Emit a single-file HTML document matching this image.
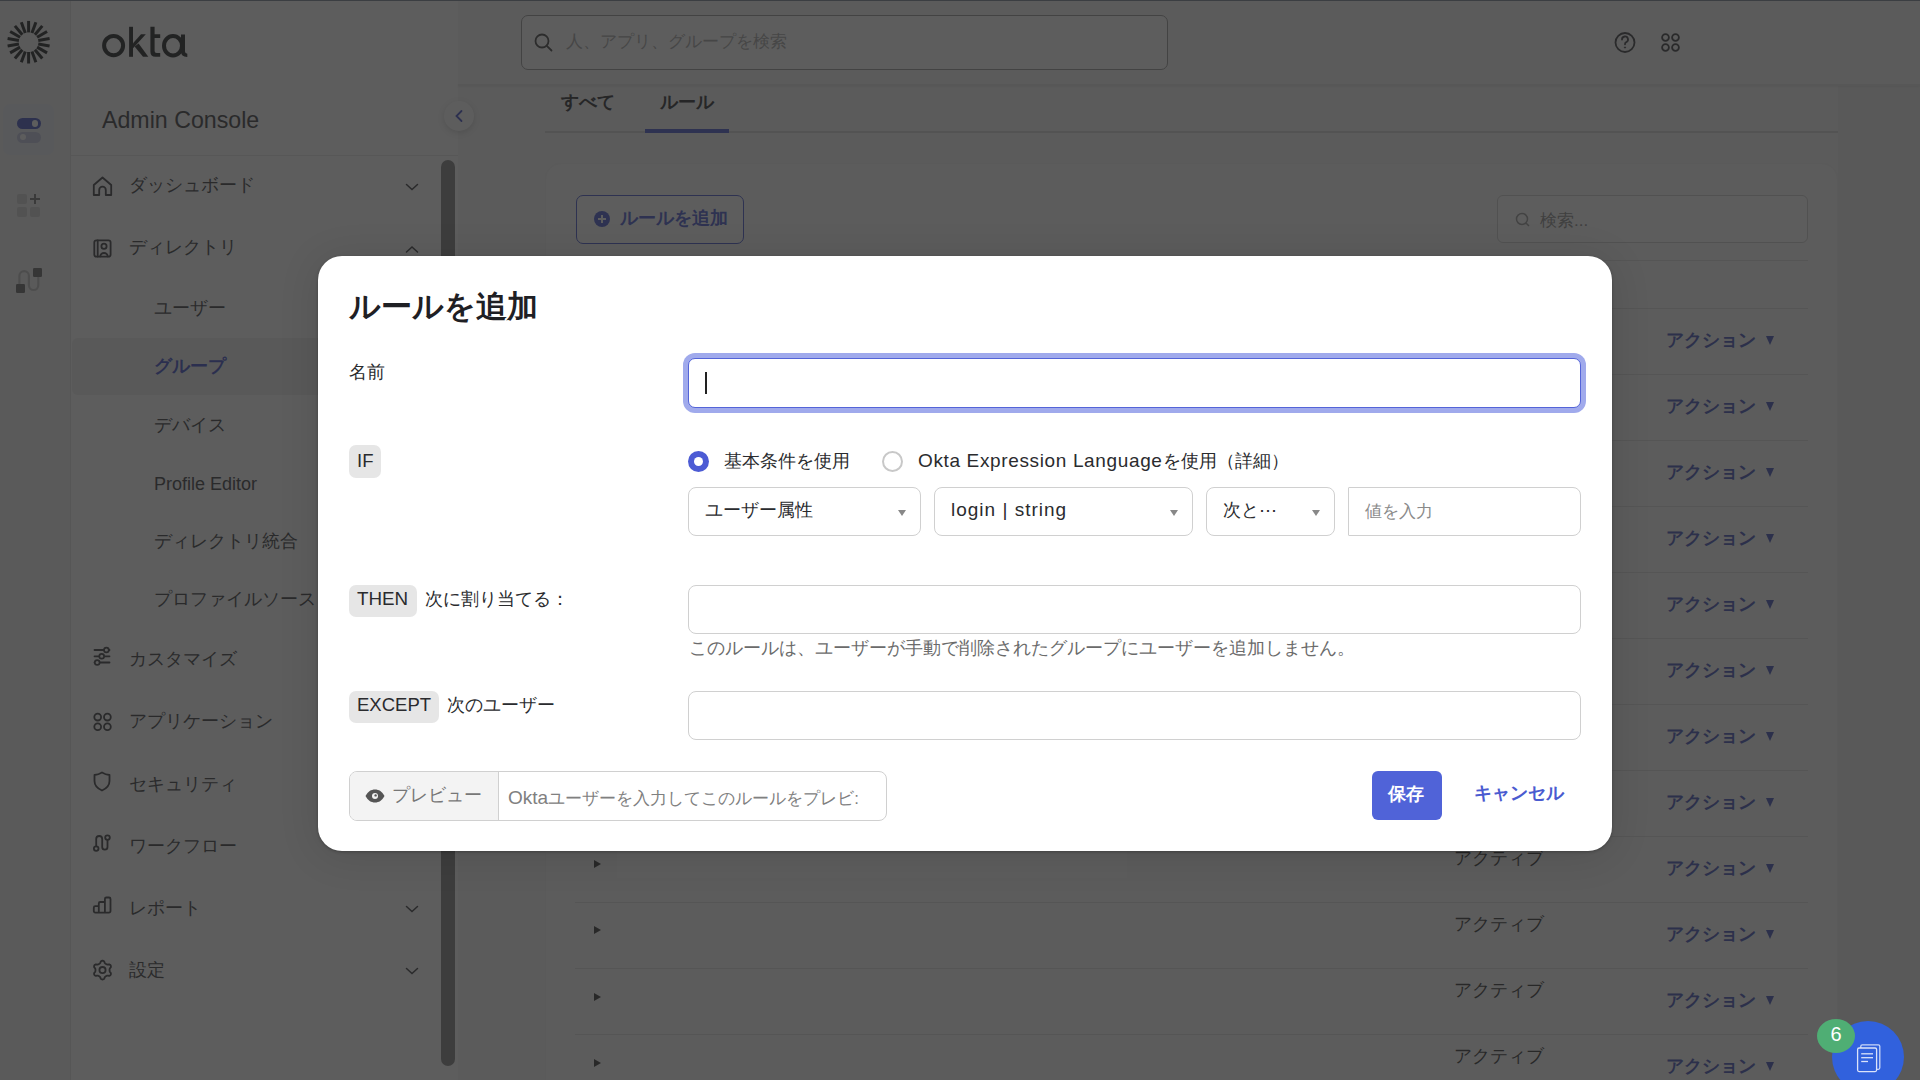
<!DOCTYPE html><html lang="ja"><head><meta charset="utf-8"><style>
*{box-sizing:border-box;margin:0;padding:0}
html,body{width:1920px;height:1080px;overflow:hidden}
body{font-family:"Liberation Sans",sans-serif;background:#fff;color:#1d1d21;position:relative}
.a{position:absolute}
.t{position:absolute;white-space:nowrap;line-height:1}
.nav{font-size:18px;color:#393a3d}
.lbl{font-size:18px;color:#2a2b2e}
.badge{position:absolute;background:#e6e6e6;border-radius:7px}
.inp{position:absolute;border:1.5px solid #d0d0d0;border-radius:8px;background:#fff}
.caret{position:absolute;width:0;height:0;border-left:4.5px solid transparent;border-right:4.5px solid transparent;border-top:6px solid #555}
</style></head><body>
<div class="a" style="left:0;top:0;width:70px;height:1080px;background:#f3f3f3"></div>
<div class="a" style="left:70px;top:0;width:1px;height:1080px;background:#e3e3e3"></div>
<div class="a" style="left:71px;top:0;width:387px;height:1080px;background:#fdfdfd"></div>
<div class="a" style="left:458px;top:0;width:1462px;height:1080px;background:#efefef"></div>
<div class="a" style="left:458px;top:0;width:1462px;height:84px;background:#f6f6f6"></div>
<div class="a" style="left:458px;top:84px;width:1380px;height:996px;background:#f5f5f5"></div>
<svg class="a" style="left:0;top:0" width="60" height="80" viewBox="0 0 60 80"><g stroke="#1e1f21" stroke-width="3" stroke-linecap="butt"><line x1="28.60" y1="32.40" x2="28.60" y2="20.90"/><line x1="31.95" y1="32.99" x2="35.89" y2="22.18"/><line x1="34.90" y1="34.69" x2="42.29" y2="25.88"/><line x1="37.09" y1="37.30" x2="47.05" y2="31.55"/><line x1="38.25" y1="40.50" x2="49.58" y2="38.50"/><line x1="38.25" y1="43.90" x2="49.58" y2="45.90"/><line x1="37.09" y1="47.10" x2="47.05" y2="52.85"/><line x1="34.90" y1="49.71" x2="42.29" y2="58.52"/><line x1="31.95" y1="51.41" x2="35.89" y2="62.22"/><line x1="28.60" y1="52.00" x2="28.60" y2="63.50"/><line x1="25.25" y1="51.41" x2="21.31" y2="62.22"/><line x1="22.30" y1="49.71" x2="14.91" y2="58.52"/><line x1="20.11" y1="47.10" x2="10.15" y2="52.85"/><line x1="18.95" y1="43.90" x2="7.62" y2="45.90"/><line x1="18.95" y1="40.50" x2="7.62" y2="38.50"/><line x1="20.11" y1="37.30" x2="10.15" y2="31.55"/><line x1="22.30" y1="34.69" x2="14.91" y2="25.88"/><line x1="25.25" y1="32.99" x2="21.31" y2="22.18"/></g></svg>
<svg class="a" style="left:95px;top:20px" width="100" height="45" viewBox="95 20 100 45">
<g fill="none" stroke="#1e1f21" stroke-width="4">
<ellipse cx="113.6" cy="45.6" rx="9.5" ry="9.7"/>
<ellipse cx="173" cy="45.7" rx="9" ry="9.7"/>
</g>
<g fill="#1e1f21">
<rect x="129.1" y="26.8" width="3.9" height="30"/>
<polygon points="133,43.2 141,34.2 145.8,34.2 133,48.2"/>
<polygon points="134.6,46.6 138.6,43.6 148.3,56.8 143,56.8"/>
<path d="M150.4 26.8 H154.6 V34.2 H160.2 V37.9 H154.6 V51 Q154.6 53.1 156.7 53.1 H160.2 V56.8 H155.4 Q150.4 56.8 150.4 51.8 Z"/>
<path d="M181 34.6 H185 V51.5 Q185 53.6 187.3 53.8 V56.9 Q181 57 181 51.5 Z"/>
</g></svg>
<div class="a" style="left:3px;top:104px;width:51px;height:51px;background:#eceef6;border-radius:7px"></div>
<div class="a" style="left:17px;top:117.5px;width:23.5px;height:11.7px;border-radius:6px;background:#4656c4"></div>
<div class="a" style="left:31.5px;top:120.1px;width:6.5px;height:6.5px;border-radius:50%;background:#fff"></div>
<div class="a" style="left:17px;top:131.6px;width:23.5px;height:11px;border-radius:6px;background:#c3c8e4"></div>
<div class="a" style="left:19.6px;top:134px;width:6.4px;height:6.4px;border-radius:50%;background:#fff"></div>
<div class="a" style="left:17px;top:194px;width:10px;height:10px;border-radius:2px;background:#d4d4d4"></div>
<div class="a" style="left:17px;top:207px;width:10px;height:10px;border-radius:2px;background:#d4d4d4"></div>
<div class="a" style="left:30px;top:207px;width:10px;height:10px;border-radius:2px;background:#d4d4d4"></div>
<div class="a" style="left:34px;top:194px;width:2.4px;height:10px;background:#777"></div>
<div class="a" style="left:30px;top:197.8px;width:10px;height:2.4px;background:#777"></div>
<svg class="a" style="left:10px;top:260px" width="40" height="40" viewBox="10 260 40 40">
<path d="M19.4 285 V275.8 a4.75 4.75 0 0 1 9.5 0 V285.3 a4.7 4.7 0 0 0 9.4 0 V276" fill="none" stroke="#c2c2c2" stroke-width="2.2"/>
<rect x="16" y="284" width="9" height="9" rx="1.2" fill="#6a6a6a"/>
<rect x="33" y="268" width="9" height="9" rx="1.2" fill="#6a6a6a"/>
</svg>
<div class="t" style="left:102px;top:109px;font-size:23.2px;color:#3a3b3f">Admin Console</div>
<div class="a" style="left:71px;top:155px;width:387px;height:1px;background:#e6e6e6"></div>
<div class="a" style="left:72px;top:338px;width:366px;height:57px;background:#efefef;border-radius:6px"></div>
<div class="t nav" style="left:129px;top:176px;font-size:18px;color:#3a3b3f;font-weight:normal">ダッシュボード</div>
<div class="t nav" style="left:129px;top:238px;font-size:18px;color:#3a3b3f;font-weight:normal">ディレクトリ</div>
<div class="t nav" style="left:154px;top:299px;font-size:18px;color:#3a3b3f;font-weight:normal">ユーザー</div>
<div class="t nav" style="left:154px;top:357px;font-size:18px;color:#4050c8;font-weight:bold">グループ</div>
<div class="t nav" style="left:154px;top:416px;font-size:18px;color:#3a3b3f;font-weight:normal">デバイス</div>
<div class="t nav" style="left:154px;top:475px;font-size:18px;color:#3a3b3f;font-weight:normal">Profile Editor</div>
<div class="t nav" style="left:154px;top:532px;font-size:18px;color:#3a3b3f;font-weight:normal">ディレクトリ統合</div>
<div class="t nav" style="left:154px;top:590px;font-size:18px;color:#3a3b3f;font-weight:normal">プロファイルソース</div>
<div class="t nav" style="left:129px;top:650px;font-size:18px;color:#3a3b3f;font-weight:normal">カスタマイズ</div>
<div class="t nav" style="left:129px;top:712px;font-size:18px;color:#3a3b3f;font-weight:normal">アプリケーション</div>
<div class="t nav" style="left:129px;top:775px;font-size:18px;color:#3a3b3f;font-weight:normal">セキュリティ</div>
<div class="t nav" style="left:129px;top:837px;font-size:18px;color:#3a3b3f;font-weight:normal">ワークフロー</div>
<div class="t nav" style="left:129px;top:899px;font-size:18px;color:#3a3b3f;font-weight:normal">レポート</div>
<div class="t nav" style="left:129px;top:961px;font-size:18px;color:#3a3b3f;font-weight:normal">設定</div>
<svg class="a" style="left:0;top:0" width="460" height="1080" viewBox="0 0 460 1080"><path d="M93.8 195 V185 L102.5 177.5 L111.2 185 V195 H105.8 V190 a3.3 3.3 0 0 0 -6.6 0 V195 Z" fill="none" stroke="#3a3b3f" stroke-width="1.8" stroke-linecap="round" stroke-linejoin="round"/><path d="M406.5 184.5 L412 189.5 L417.5 184.5" fill="none" stroke="#3a3b3f" stroke-width="1.5" stroke-linecap="round"/><rect x="94.3" y="240.3" width="16.3" height="16.3" rx="2.2" fill="none" stroke="#3a3b3f" stroke-width="1.8" stroke-linecap="round" stroke-linejoin="round"/><line x1="97.7" y1="240.5" x2="97.7" y2="256.5" fill="none" stroke="#3a3b3f" stroke-width="1.8" stroke-linecap="round" stroke-linejoin="round"/><circle cx="104" cy="246.3" r="2.6" fill="none" stroke="#3a3b3f" stroke-width="1.8" stroke-linecap="round" stroke-linejoin="round"/><path d="M100.3 256.4 a3.7 3.4 0 0 1 7.4 0" fill="none" stroke="#3a3b3f" stroke-width="1.8" stroke-linecap="round" stroke-linejoin="round"/><path d="M406.5 252 L412 247 L417.5 252" fill="none" stroke="#3a3b3f" stroke-width="1.5" stroke-linecap="round"/><line x1="94.5" y1="650" x2="109.5" y2="650" fill="none" stroke="#3a3b3f" stroke-width="1.8" stroke-linecap="round" stroke-linejoin="round"/><line x1="94.5" y1="656.3" x2="109.5" y2="656.3" fill="none" stroke="#3a3b3f" stroke-width="1.8" stroke-linecap="round" stroke-linejoin="round"/><line x1="94.5" y1="662.5" x2="109.5" y2="662.5" fill="none" stroke="#3a3b3f" stroke-width="1.8" stroke-linecap="round" stroke-linejoin="round"/><circle cx="106.4" cy="650" r="2.4" fill="#fafafa" stroke="#3a3b3f" stroke-width="1.7"/><circle cx="101.7" cy="656.3" r="2.4" fill="#fafafa" stroke="#3a3b3f" stroke-width="1.7"/><circle cx="97.2" cy="662.5" r="2.4" fill="#fafafa" stroke="#3a3b3f" stroke-width="1.7"/><circle cx="97.7" cy="717.1" r="3.4" fill="none" stroke="#3a3b3f" stroke-width="1.8" stroke-linecap="round" stroke-linejoin="round"/><circle cx="97.7" cy="726.7" r="3.4" fill="none" stroke="#3a3b3f" stroke-width="1.8" stroke-linecap="round" stroke-linejoin="round"/><circle cx="107.4" cy="717.1" r="3.4" fill="none" stroke="#3a3b3f" stroke-width="1.8" stroke-linecap="round" stroke-linejoin="round"/><circle cx="107.4" cy="726.7" r="3.4" fill="none" stroke="#3a3b3f" stroke-width="1.8" stroke-linecap="round" stroke-linejoin="round"/><path d="M102 772.5 C104.5 774 107 774.8 109.5 775 V781 C109.5 785.5 106.5 788.5 102 790.5 C97.5 788.5 94.5 785.5 94.5 781 V775 C97 774.8 99.5 774 102 772.5 Z" fill="none" stroke="#3a3b3f" stroke-width="1.8" stroke-linecap="round" stroke-linejoin="round"/><circle cx="96.2" cy="848.6" r="2.3" fill="none" stroke="#3a3b3f" stroke-width="1.8" stroke-linecap="round" stroke-linejoin="round"/><circle cx="107.5" cy="837.6" r="2.3" fill="none" stroke="#3a3b3f" stroke-width="1.8" stroke-linecap="round" stroke-linejoin="round"/><path d="M96.2 846.3 V839 a3 3 0 0 1 6 0 V847 a2.65 2.65 0 0 0 5.3 0 V839.9" fill="none" stroke="#3a3b3f" stroke-width="1.8" stroke-linecap="round" stroke-linejoin="round"/><path d="M95.3 912.6 H109 a1.5 1.5 0 0 0 1.5 -1.5 V899 a1.5 1.5 0 0 0 -1.5 -1.5 H106.4 a1.5 1.5 0 0 0 -1.5 1.5 V902 H100.3 a1.5 1.5 0 0 0 -1.5 1.5 V906.2 H95.3 a1.5 1.5 0 0 0 -1.5 1.5 V911.1 a1.5 1.5 0 0 0 1.5 1.5 Z M98.8 906.2 V912.6 M104.9 902 V912.6" fill="none" stroke="#3a3b3f" stroke-width="1.8" stroke-linecap="round" stroke-linejoin="round"/><path d="M406.5 906.5 L412 911.5 L417.5 906.5" fill="none" stroke="#3a3b3f" stroke-width="1.5" stroke-linecap="round"/><polygon points="109.50,970.10 109.52,970.47 109.57,970.84 109.66,971.23 109.79,971.65 110.13,972.14 110.72,972.77 110.89,973.32 110.92,973.85 110.84,974.35 110.64,974.80 110.35,975.20 109.96,975.52 109.49,975.76 108.92,975.88 108.09,975.69 107.49,975.64 107.06,975.73 106.68,975.85 106.33,975.99 106.00,976.16 105.69,976.36 105.39,976.59 105.10,976.86 104.80,977.19 104.54,977.73 104.30,978.55 103.91,978.98 103.46,979.27 102.99,979.44 102.50,979.50 102.01,979.44 101.54,979.27 101.09,978.98 100.70,978.55 100.46,977.73 100.20,977.19 99.90,976.86 99.61,976.59 99.31,976.36 99.00,976.16 98.67,975.99 98.32,975.85 97.94,975.73 97.51,975.64 96.91,975.69 96.08,975.88 95.51,975.76 95.04,975.52 94.65,975.20 94.36,974.80 94.16,974.35 94.08,973.85 94.11,973.32 94.28,972.77 94.87,972.14 95.21,971.65 95.34,971.23 95.43,970.84 95.48,970.47 95.50,970.10 95.48,969.73 95.43,969.36 95.34,968.97 95.21,968.55 94.87,968.06 94.28,967.43 94.11,966.88 94.08,966.35 94.16,965.85 94.36,965.40 94.65,965.00 95.04,964.68 95.51,964.44 96.08,964.32 96.91,964.51 97.51,964.56 97.94,964.47 98.32,964.35 98.67,964.21 99.00,964.04 99.31,963.84 99.61,963.61 99.90,963.34 100.20,963.01 100.46,962.47 100.70,961.65 101.09,961.22 101.54,960.93 102.01,960.76 102.50,960.70 102.99,960.76 103.46,960.93 103.91,961.22 104.30,961.65 104.54,962.47 104.80,963.01 105.10,963.34 105.39,963.61 105.69,963.84 106.00,964.04 106.33,964.21 106.68,964.35 107.06,964.47 107.49,964.56 108.09,964.51 108.92,964.32 109.49,964.44 109.96,964.68 110.35,965.00 110.64,965.40 110.84,965.85 110.92,966.35 110.89,966.88 110.72,967.43 110.13,968.06 109.79,968.55 109.66,968.97 109.57,969.36 109.52,969.73" fill="none" stroke="#3a3b3f" stroke-width="1.8" stroke-linecap="round" stroke-linejoin="round"/><circle cx="102.5" cy="970.1" r="3.1" fill="none" stroke="#3a3b3f" stroke-width="1.8" stroke-linecap="round" stroke-linejoin="round"/><path d="M406.5 968.5 L412 973.5 L417.5 968.5" fill="none" stroke="#3a3b3f" stroke-width="1.5" stroke-linecap="round"/></svg>
<div class="a" style="left:441px;top:160px;width:14px;height:906px;border-radius:7px;background:#858585"></div>
<div class="a" style="left:444px;top:101px;width:30px;height:30px;border-radius:15px;background:#fff;box-shadow:0 2px 6px rgba(0,0,0,0.16)"></div>
<svg class="a" style="left:452px;top:108px" width="14" height="16" viewBox="0 0 14 16"><path d="M9.5 3 L4.5 8 L9.5 13" fill="none" stroke="#4452c9" stroke-width="1.8" stroke-linecap="round"/></svg>
<div class="a" style="left:458px;top:84px;width:1462px;height:1.5px;background:#e8e8e8;box-shadow:0 1px 2px rgba(0,0,0,0.06)"></div>
<div class="a" style="left:521px;top:15px;width:647px;height:55px;border:1.3px solid #999;border-radius:7px;background:#fff"></div>
<svg class="a" style="left:530px;top:30px" width="26" height="26" viewBox="530 30 26 26"><circle cx="542" cy="41" r="6.5" fill="none" stroke="#444" stroke-width="1.8"/><line x1="546.8" y1="45.8" x2="551.5" y2="50.5" stroke="#444" stroke-width="1.8" stroke-linecap="round"/></svg>
<div class="t" style="left:566px;top:34px;font-size:16.8px;color:#a8a8a8">人、アプリ、グループを検索</div>
<svg class="a" style="left:1600px;top:20px" width="100" height="45" viewBox="1600 20 100 45"><circle cx="1625" cy="42.5" r="9.5" fill="none" stroke="#3a3b3f" stroke-width="1.8" stroke-linecap="round" stroke-linejoin="round"/><path d="M1622 39.5 a3 3 0 1 1 4 2.8 c-0.8 0.4 -1 1 -1 2" fill="none" stroke="#3a3b3f" stroke-width="1.8" stroke-linecap="round" stroke-linejoin="round"/><circle cx="1625" cy="47.5" r="0.6" fill="#3a3b3f" stroke="#3a3b3f"/><circle cx="1665.5" cy="37.5" r="3.4" fill="none" stroke="#3a3b3f" stroke-width="1.8" stroke-linecap="round" stroke-linejoin="round"/><circle cx="1665.5" cy="47.5" r="3.4" fill="none" stroke="#3a3b3f" stroke-width="1.8" stroke-linecap="round" stroke-linejoin="round"/><circle cx="1675.5" cy="37.5" r="3.4" fill="none" stroke="#3a3b3f" stroke-width="1.8" stroke-linecap="round" stroke-linejoin="round"/><circle cx="1675.5" cy="47.5" r="3.4" fill="none" stroke="#3a3b3f" stroke-width="1.8" stroke-linecap="round" stroke-linejoin="round"/></svg>
<div class="t" style="left:561px;top:93px;font-size:18px;color:#2b2c30;font-weight:bold">すべて</div>
<div class="t" style="left:660px;top:93px;font-size:18px;color:#2b2c30;font-weight:bold">ルール</div>
<div class="a" style="left:545px;top:131px;width:1293px;height:1.6px;background:#d9d9d9"></div>
<div class="a" style="left:645px;top:129px;width:84px;height:3.5px;background:#4a5bd0"></div>
<div class="a" style="left:545px;top:163px;width:1293px;height:960px;border-radius:16px;background:#f9f9f9;border:1px solid #f1f1f1"></div>
<div class="a" style="left:617px;top:838px;width:510px;height:40px;background:#ffffff"></div>
<div class="a" style="left:576px;top:195px;width:168px;height:49px;border:1.5px solid #4a5bd0;border-radius:7px;background:#fff"></div>
<svg class="a" style="left:592px;top:209px" width="20" height="20" viewBox="592 209 20 20"><circle cx="602" cy="219" r="8" fill="#4a5bd0"/><line x1="598" y1="219" x2="606" y2="219" stroke="#fff" stroke-width="2"/><line x1="602" y1="215" x2="602" y2="223" stroke="#fff" stroke-width="2"/></svg>
<div class="t" style="left:619.5px;top:209px;font-size:18px;color:#4a5bd0;font-weight:bold">ルールを追加</div>
<div class="a" style="left:1497px;top:195px;width:311px;height:48px;border:1px solid #cfcfcf;border-radius:6px;background:#fff"></div>
<svg class="a" style="left:1510px;top:208px" width="20" height="20" viewBox="1510 208 20 20"><circle cx="1522" cy="219" r="5.5" fill="none" stroke="#9a9a9a" stroke-width="1.5"/><line x1="1526" y1="223" x2="1529" y2="226" stroke="#9a9a9a" stroke-width="1.5"/></svg>
<div class="t" style="left:1540px;top:212px;font-size:17px;color:#8e8e8e">検索...</div>
<div class="a" style="left:575px;top:260px;width:1233px;height:1.3px;background:#e0e0e0"></div>
<div class="a" style="left:575px;top:308px;width:1233px;height:1.3px;background:#e0e0e0"></div>
<div class="a" style="left:575px;top:374px;width:1233px;height:1.3px;background:#e0e0e0"></div>
<div class="a" style="left:575px;top:440px;width:1233px;height:1.3px;background:#e0e0e0"></div>
<div class="a" style="left:575px;top:506px;width:1233px;height:1.3px;background:#e0e0e0"></div>
<div class="a" style="left:575px;top:572px;width:1233px;height:1.3px;background:#e0e0e0"></div>
<div class="a" style="left:575px;top:638px;width:1233px;height:1.3px;background:#e0e0e0"></div>
<div class="a" style="left:575px;top:704px;width:1233px;height:1.3px;background:#e0e0e0"></div>
<div class="a" style="left:575px;top:770px;width:1233px;height:1.3px;background:#e0e0e0"></div>
<div class="a" style="left:575px;top:836px;width:1233px;height:1.3px;background:#e0e0e0"></div>
<div class="a" style="left:575px;top:902px;width:1233px;height:1.3px;background:#e0e0e0"></div>
<div class="a" style="left:575px;top:968px;width:1233px;height:1.3px;background:#e0e0e0"></div>
<div class="a" style="left:575px;top:1034px;width:1233px;height:1.3px;background:#e0e0e0"></div>
<div class="t" style="left:1666px;top:331px;font-size:18px;color:#4253b8;font-weight:bold">アクション</div>
<div class="a" style="left:1766px;top:336.4px;width:0;height:0;border-left:4.4px solid transparent;border-right:4.4px solid transparent;border-top:9px solid #4253b8"></div>
<div class="t" style="left:1666px;top:397px;font-size:18px;color:#4253b8;font-weight:bold">アクション</div>
<div class="a" style="left:1766px;top:402.4px;width:0;height:0;border-left:4.4px solid transparent;border-right:4.4px solid transparent;border-top:9px solid #4253b8"></div>
<div class="t" style="left:1666px;top:463px;font-size:18px;color:#4253b8;font-weight:bold">アクション</div>
<div class="a" style="left:1766px;top:468.4px;width:0;height:0;border-left:4.4px solid transparent;border-right:4.4px solid transparent;border-top:9px solid #4253b8"></div>
<div class="t" style="left:1666px;top:529px;font-size:18px;color:#4253b8;font-weight:bold">アクション</div>
<div class="a" style="left:1766px;top:534.4px;width:0;height:0;border-left:4.4px solid transparent;border-right:4.4px solid transparent;border-top:9px solid #4253b8"></div>
<div class="t" style="left:1666px;top:595px;font-size:18px;color:#4253b8;font-weight:bold">アクション</div>
<div class="a" style="left:1766px;top:600.4px;width:0;height:0;border-left:4.4px solid transparent;border-right:4.4px solid transparent;border-top:9px solid #4253b8"></div>
<div class="t" style="left:1666px;top:661px;font-size:18px;color:#4253b8;font-weight:bold">アクション</div>
<div class="a" style="left:1766px;top:666.4px;width:0;height:0;border-left:4.4px solid transparent;border-right:4.4px solid transparent;border-top:9px solid #4253b8"></div>
<div class="t" style="left:1666px;top:727px;font-size:18px;color:#4253b8;font-weight:bold">アクション</div>
<div class="a" style="left:1766px;top:732.4px;width:0;height:0;border-left:4.4px solid transparent;border-right:4.4px solid transparent;border-top:9px solid #4253b8"></div>
<div class="t" style="left:1666px;top:793px;font-size:18px;color:#4253b8;font-weight:bold">アクション</div>
<div class="a" style="left:1766px;top:798.4px;width:0;height:0;border-left:4.4px solid transparent;border-right:4.4px solid transparent;border-top:9px solid #4253b8"></div>
<div class="t" style="left:1666px;top:859px;font-size:18px;color:#4253b8;font-weight:bold">アクション</div>
<div class="a" style="left:1766px;top:864.4px;width:0;height:0;border-left:4.4px solid transparent;border-right:4.4px solid transparent;border-top:9px solid #4253b8"></div>
<div class="t" style="left:1666px;top:925px;font-size:18px;color:#4253b8;font-weight:bold">アクション</div>
<div class="a" style="left:1766px;top:930.4px;width:0;height:0;border-left:4.4px solid transparent;border-right:4.4px solid transparent;border-top:9px solid #4253b8"></div>
<div class="t" style="left:1666px;top:991px;font-size:18px;color:#4253b8;font-weight:bold">アクション</div>
<div class="a" style="left:1766px;top:996.4px;width:0;height:0;border-left:4.4px solid transparent;border-right:4.4px solid transparent;border-top:9px solid #4253b8"></div>
<div class="t" style="left:1666px;top:1057px;font-size:18px;color:#4253b8;font-weight:bold">アクション</div>
<div class="a" style="left:1766px;top:1062.4px;width:0;height:0;border-left:4.4px solid transparent;border-right:4.4px solid transparent;border-top:9px solid #4253b8"></div>
<div class="t" style="left:1454px;top:849px;font-size:18px;color:#333">アクティブ</div>
<div class="t" style="left:1454px;top:915px;font-size:18px;color:#333">アクティブ</div>
<div class="t" style="left:1454px;top:981px;font-size:18px;color:#333">アクティブ</div>
<div class="t" style="left:1454px;top:1047px;font-size:18px;color:#333">アクティブ</div>
<div class="a" style="left:593.7px;top:860.3px;width:0;height:0;border-top:4px solid transparent;border-bottom:4px solid transparent;border-left:7px solid #333"></div>
<div class="a" style="left:593.7px;top:926.3px;width:0;height:0;border-top:4px solid transparent;border-bottom:4px solid transparent;border-left:7px solid #333"></div>
<div class="a" style="left:593.7px;top:993.3px;width:0;height:0;border-top:4px solid transparent;border-bottom:4px solid transparent;border-left:7px solid #333"></div>
<div class="a" style="left:593.7px;top:1059.3px;width:0;height:0;border-top:4px solid transparent;border-bottom:4px solid transparent;border-left:7px solid #333"></div>
<div class="a" style="left:0;top:0;width:1920px;height:1080px;background:rgba(37,37,37,0.74)"></div>
<div class="a" style="left:0;top:0;width:1920px;height:1px;background:#3b3e42"></div>
<div class="a" style="left:318px;top:256px;width:1294px;height:595px;background:#fff;border-radius:24px;box-shadow:0 1px 3px rgba(0,0,0,0.25),0 4px 40px rgba(0,0,0,0.12)"></div>
<div class="t" style="left:349px;top:291px;font-size:31px;font-weight:bold;color:#1f2024">ルールを追加</div>
<div class="t lbl" style="left:349px;top:363px">名前</div>
<div class="a" style="left:688px;top:358px;width:893px;height:50px;border-radius:7px;background:#fff;border:1.5px solid #5464d8;box-shadow:0 0 0 5px #a0aaec"></div>
<div class="a" style="left:705px;top:372px;width:2px;height:22px;background:#222"></div>
<div class="badge" style="left:349px;top:445px;width:32px;height:33px"></div>
<div class="t lbl" style="left:357px;top:452px;font-size:18.5px">IF</div>
<div class="a" style="left:688px;top:451px;width:21px;height:21px;border-radius:50%;background:#4c5bd4"></div>
<div class="a" style="left:694px;top:457px;width:9px;height:9px;border-radius:50%;background:#fff"></div>
<div class="t lbl" style="left:724px;top:452px">基本条件を使用</div>
<div class="a" style="left:882px;top:451px;width:21px;height:21px;border-radius:50%;border:2px solid #c8c8c8;background:#fff"></div>
<div class="t lbl" style="left:918px;top:451px"><span style="font-size:19px;letter-spacing:0.64px">Okta Expression Language</span>を使用（詳細）</div>
<div class="inp" style="left:688px;top:487px;width:233px;height:49px"></div>
<div class="t lbl" style="left:705px;top:501px">ユーザー属性</div>
<div class="caret" style="left:898px;top:510px;border-top-color:#888"></div>
<div class="inp" style="left:934px;top:487px;width:259px;height:49px"></div>
<div class="t lbl" style="left:951px;top:501px"><span style="font-size:19px;letter-spacing:1px;position:relative;top:-1.5px">login | string</span></div>
<div class="caret" style="left:1170px;top:510px;border-top-color:#888"></div>
<div class="inp" style="left:1206px;top:487px;width:129px;height:49px"></div>
<div class="t lbl" style="left:1223px;top:501px">次と⋯</div>
<div class="caret" style="left:1312px;top:510px;border-top-color:#888"></div>
<div class="inp" style="left:1348px;top:487px;width:233px;height:49px;border-radius:1px 8px 8px 1px"></div>
<div class="t" style="left:1365px;top:503px;font-size:16.5px;color:#8a8a8a">値を入力</div>
<div class="badge" style="left:349px;top:585px;width:68px;height:32px"></div>
<div class="t lbl" style="left:357px;top:590px;font-size:18.8px">THEN</div>
<div class="t lbl" style="left:425px;top:590px">次に割り当てる：</div>
<div class="inp" style="left:688px;top:585px;width:893px;height:49px"></div>
<div class="t" style="left:689px;top:639.5px;font-size:17.7px;color:#6b6b6b">このルールは、ユーザーが手動で削除されたグループにユーザーを追加しません。</div>
<div class="badge" style="left:349px;top:691px;width:90px;height:32px"></div>
<div class="t lbl" style="left:357px;top:696px;font-size:18.5px">EXCEPT</div>
<div class="t lbl" style="left:447px;top:696px">次のユーザー</div>
<div class="inp" style="left:688px;top:691px;width:893px;height:49px"></div>
<div class="inp" style="left:349px;top:771px;width:538px;height:50px;overflow:hidden"></div>
<div class="a" style="left:350px;top:772px;width:149px;height:48px;background:#f3f3f3;border-right:1px solid #d0d0d0;border-radius:7px 0 0 7px"></div>
<svg class="a" style="left:364px;top:786px" width="22" height="20" viewBox="364 786 22 20"><path d="M365.5 796 C368 791.5 371 789.5 375 789.5 C379 789.5 382 791.5 384.5 796 C382 800.5 379 802.5 375 802.5 C371 802.5 368 800.5 365.5 796 Z" fill="#555"/><circle cx="375" cy="796" r="3" fill="#f3f3f3"/><circle cx="375.6" cy="795.4" r="1.2" fill="#555"/></svg>
<div class="t" style="left:392px;top:786px;font-size:18px;color:#777">プレビュー</div>
<div class="t" style="left:508px;top:787.5px;font-size:16.8px;color:#808080"><span style="font-size:19px">Okta</span>ユーザーを入力してこのルールをプレビ:</div>
<div class="a" style="left:1372px;top:771px;width:70px;height:49px;border-radius:6px;background:#5063d8"></div>
<div class="t" style="left:1388px;top:785px;font-size:18px;color:#fff;font-weight:bold">保存</div>
<div class="t" style="left:1474px;top:784px;font-size:18px;color:#4a5bd0;font-weight:bold">キャンセル</div>
<div class="a" style="left:1832px;top:1021px;width:72px;height:72px;border-radius:50%;background:#3161dd"></div>
<svg class="a" style="left:1850px;top:1040px" width="36" height="36" viewBox="1850 1040 36 36"><rect x="1860.8" y="1044.8" width="19" height="24.5" rx="1.5" fill="#3161dd" stroke="#c9d6f7" stroke-width="1.3"/><rect x="1857.6" y="1048" width="19" height="23.6" rx="1.5" fill="#3161dd" stroke="#dbe3fa" stroke-width="1.3"/><line x1="1861.2" y1="1053.8" x2="1873" y2="1053.8" stroke="#dbe3fa" stroke-width="1.3"/><line x1="1861.2" y1="1057.7" x2="1873" y2="1057.7" stroke="#dbe3fa" stroke-width="1.3"/><line x1="1861.2" y1="1061.5" x2="1868" y2="1061.5" stroke="#dbe3fa" stroke-width="1.3"/></svg>
<div class="a" style="left:1817px;top:1018.5px;width:38px;height:34px;border-radius:50%;background:#4fae74"></div>
<div class="t" style="left:1830.5px;top:1023.5px;font-size:20px;color:#fff">6</div>
</body></html>
